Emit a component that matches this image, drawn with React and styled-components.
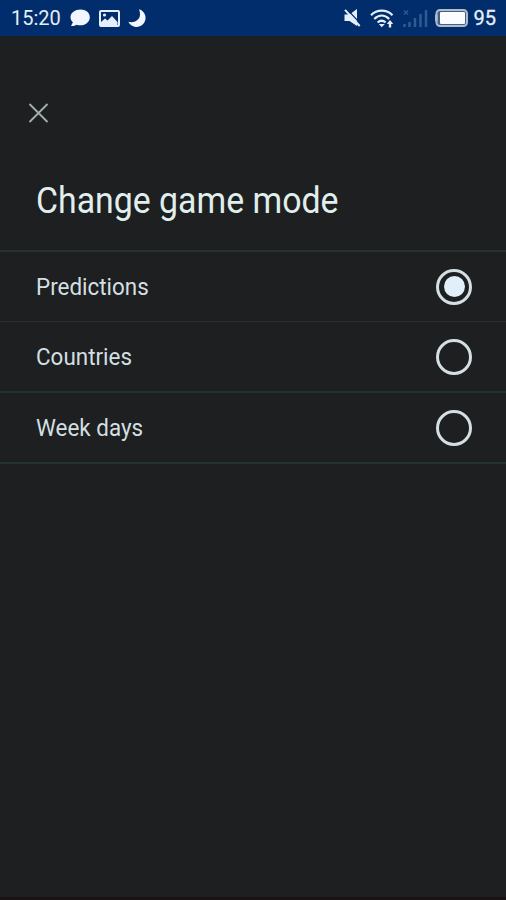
import { useState } from 'react';
import styled, { createGlobalStyle } from 'styled-components';

const GlobalStyle = createGlobalStyle`
  body {
    margin: 0;
    background: #1d1f20;
    font-family: Roboto, "Liberation Sans", sans-serif;
  }
`;

const Screen = styled.div`
  box-sizing: border-box;
  display: flex;
  flex-direction: column;
  width: 506px;
  height: 900px;
  overflow: hidden;
  background: #1d1f20;
  border-bottom: 3px solid #1a1316;
`;

const StatusBar = styled.header`
  display: flex;
  align-items: center;
  justify-content: space-between;
  box-sizing: border-box;
  height: 36px;
  padding: 0 10px 0 11px;
  background: #012d6c;
  color: #e6edf8;
  font-size: 20px;
  line-height: 36px;
`;

const StatusGroup = styled.div`
  display: flex;
  align-items: center;

  svg {
    display: block;
    margin-left: ${({ $gap }) => $gap}px;
  }

  svg:nth-of-type(4) {
    margin-left: 7px;
  }
`;

const Clock = styled.span`
  width: 51px;
`;

const Battery = styled.span`
  margin-left: 6px;
  -webkit-text-stroke: 0.3px currentColor;
`;

const CloseButton = styled.button`
  align-self: flex-start;
  margin: 65px 0 0 27px;
  padding: 0;
  width: 24px;
  height: 24px;
  border: 0;
  background: none;
  color: #a3b0ad;

  svg {
    display: block;
  }
`;

const Title = styled.h1`
  margin: 53px 0 0 36px;
  height: 72px;
  color: #e0efed;
  font-size: 36px;
  font-weight: 400;
  line-height: 46px;
  white-space: nowrap;
  transform: scaleX(0.94);
  transform-origin: left;
`;

const Options = styled.div`
  border-top: 2px solid #263231;
`;

const Option = styled.label`
  box-sizing: border-box;
  display: flex;
  align-items: center;
  justify-content: space-between;
  height: 71px;
  padding: 0 34px 0 36px;
  border-bottom: 2px solid #263231;
  color: #d3dfe1;
  font-size: 23px;

  &:first-child {
    height: 70px;
    border-bottom-width: 1px;
  }
`;

const OptionName = styled.span`
  padding-top: 2px;
  transform: scaleX(0.975);
  transform-origin: left;
`;

const Radio = styled.input`
  appearance: none;
  box-sizing: border-box;
  display: grid;
  place-items: center;
  width: 36px;
  height: 36px;
  margin: 0;
  border: 3px solid #d3dfe2;
  border-radius: 50%;

  &:checked::before {
    content: '';
    width: 21px;
    height: 21px;
    border-radius: 50%;
    background: #e0effa;
  }
`;

const ChatIcon = () => (
  <svg width="20" height="18" viewBox="0 0 20 18" fill="#f2f7ff">
    <path d="M10.5 0.5C5.2 0.5 0.500 3.700.5 8c0 2.100.9 3.900 2.400 5.200L1 17c2.200.3 4.300-.5 5.500-1.300 1.200.4 2.600.6 4 .6 5.200 0 9.300-3.500 9.300-8.100S15.700.5 10.500.5z" />
  </svg>
);

const PictureIcon = () => (
  <svg width="22" height="17" viewBox="-1 0 22 17" fill="none" stroke="#e6eefa">
    <rect x="1" y="1" width="19" height="15" rx="1" strokeWidth="2" />
    <path d="M2 15v-3l4-3.500 2.500 2L13 6l5.500 6v3z" fill="#e6eefa" stroke="none" />
    <circle cx="5.500" cy="5" r="1.600" fill="#e6eefa" stroke="none" />
  </svg>
);

const MoonIcon = () => (
  <svg width="19" height="18" viewBox="0 0 19 18" fill="#f2f7ff">
    <path d="M11 0.300a9 9 0 1 1-10.600 12.500c5.500 1.600 11.600-1.800 11.600-7.300 0-2-.3-3.500-1-5.200z" />
  </svg>
);

const MuteIcon = () => (
  <svg width="17" height="18" viewBox="0 0 17 18">
    <path d="M0.500 5.500h5L13 0v17L5.500 12h-5z" fill="#e6eefa" />
    <path d="M2.800 0l14 15" stroke="#012d6c" strokeWidth="1.200" />
    <path d="M1 0.800l14.700 16.200" stroke="#e6eefa" strokeWidth="2" />
  </svg>
);

const WifiIcon = () => (
  <svg width="24" height="19" viewBox="0 0 24 19" fill="none" stroke="#e6eefa" strokeWidth="2.200">
    <path d="M1 6.200C7 .2 16.500.2 22.500 6.200" />
    <path d="M4.300 10C9 5.500 14.500 5.500 19.200 10" />
    <path d="M7.600 13.500c2.700-2.300 5.500-2.300 8 0" />
    <path d="M8.800 15h6l-3 3.200z" fill="#e6eefa" stroke="none" />
    <path d="M20 18.500v-5" strokeWidth="2.400" />
    <path d="M16.800 15l3.200-4 3.200 4z" fill="#e6eefa" stroke="none" />
  </svg>
);

const SignalIcon = () => (
  <svg width="25" height="19" viewBox="0 0 25 19" stroke="#315a91" strokeWidth="2.500">
    <path d="M1.500 18v-3M6.500 18v-5M12 18V9M17.500 18V5M23 18V1" />
    <path d="M1 1.500l4 4M5 1.500l-4 4" strokeWidth="1.300" />
  </svg>
);

const BatteryIcon = () => (
  <svg width="33" height="18" viewBox="0 0 33 18">
    <rect x="1.500" y="1" width="30.500" height="16" rx="3.500" fill="#44618c" stroke="#b1bcc9" strokeWidth="2" />
    <rect x="0" y="5.500" width="2.500" height="7" rx="1" fill="#b1bcc9" />
    <rect x="5" y="3" width="25" height="12" rx="1" fill="#fafcff" />
  </svg>
);

const CloseIcon = () => (
  <svg width="24" height="24" viewBox="0 0 24 24" stroke="currentColor" strokeWidth="1.800">
    <path d="M2.500 3l18 18M20.500 3l-18 18" />
  </svg>
);

const modes = ['Predictions', 'Countries', 'Week days'];

export default function App() {
  const [mode, setMode] = useState(modes[0]);

  return (
    <>
      <GlobalStyle />
      <Screen>
        <StatusBar>
          <StatusGroup $gap={8}>
            <Clock>15:20</Clock>
            <ChatIcon />
            <PictureIcon />
            <MoonIcon />
          </StatusGroup>
          <StatusGroup $gap={9}>
            <MuteIcon />
            <WifiIcon />
            <SignalIcon />
            <BatteryIcon />
            <Battery>95</Battery>
          </StatusGroup>
        </StatusBar>
        <CloseButton aria-label="Close">
          <CloseIcon />
        </CloseButton>
        <Title>Change game mode</Title>
        <Options>
          {modes.map((name) => (
            <Option key={name}>
              <OptionName>{name}</OptionName>
              <Radio type="radio" name="mode" checked={mode === name} onChange={() => setMode(name)} />
            </Option>
          ))}
        </Options>
      </Screen>
    </>
  );
}
